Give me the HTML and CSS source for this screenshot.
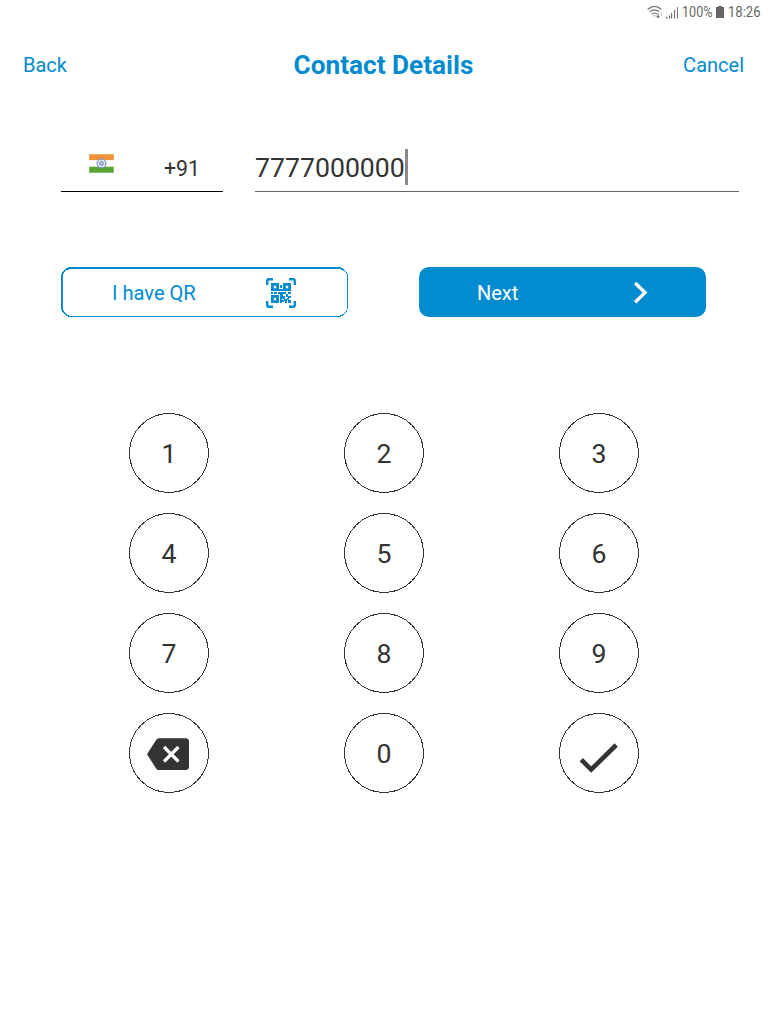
FILE: index.html
```html
<!DOCTYPE html>
<html lang="en">
<head>
<meta charset="utf-8">
<title>Contact Details</title>
<link rel="stylesheet" href="styles.css">
</head>
<body>
<div class="status">
  <svg class="wifi" width="17" height="14" viewBox="0 0 17 14" fill="none" stroke="#737373" stroke-width="1.2"><path d="M.6 4.500Q7.500-1.600 14.400 4.500M2.700 6.900q4.800-4.200 9.600 0M4.800 9.200q2.700-2.300 5.200-.2"/><path d="M6.400 10.400h2.200L7.500 11.800z" fill="#737373" stroke="none"/><path d="M11 8.500v4M9.600 11l1.400 1.600 1.400-1.600" stroke-width="1.1"/><path d="M14.500 8v3" stroke="#ccc"/></svg>
  <svg class="signal" width="13" height="13" viewBox="0 0 13 13" fill="#737373"><path d="M0 11h1.500v1.500H0zM3 9.500h1.200v3H3zM5 7h1.200v5.500H5zM8 4h1.200v8.500H8zM11 1h1v11.500h-1z"/></svg>
  <svg class="battery-text" width="31" height="20"><text x="0" y="15" textLength="30.5" lengthAdjust="spacingAndGlyphs">100%</text></svg>
  <svg class="battery" width="8" height="12" viewBox="0 0 8 12" fill="#666"><path d="M2 0h4v1h2v11H0V1h2z"/></svg>
  <svg class="clock" width="33" height="20"><text x="0" y="15" textLength="32.5" lengthAdjust="spacingAndGlyphs">18:26</text></svg>
</div>
<header class="header">
  <a class="link">Back</a>
  <h1 class="title">Contact Details</h1>
  <a class="link">Cancel</a>
</header>
<main>
  <div class="phone">
    <div class="country">
      <svg class="flag" width="25" height="19" viewBox="0 0 25 19"><path fill="#ef9237" d="M0 0h25v6.300H0z"/><path fill="#fff" d="M0 6.300h25v6.400H0z"/><path fill="#5ba534" d="M0 12.700h25V19H0z"/><path d="M.5.5h24v18H.5z" fill="none" stroke="#fff" stroke-opacity=".25"/><circle cx="12.500" cy="9.400" r="4.500" fill="#dfe5f4" stroke="#6d84bd"/><circle cx="12.500" cy="9.400" r="2" fill="#aebbe0" stroke="#6d84bd" stroke-width=".8"/></svg>
      <span class="code">+91</span>
    </div>
    <div class="number"><span>7777000000</span><i class="caret"></i></div>
  </div>
  <div class="actions">
    <button class="btn btn-outline">
      <svg class="frame" width="287" height="50" viewBox="0 0 287 50" fill="#038bd0" fill-rule="evenodd" shape-rendering="crispEdges"><path d="M10 0h267a10 10 0 0 1 10 10v30a10 10 0 0 1-10 10H10A10 10 0 0 1 0 40V10A10 10 0 0 1 10 0zM9.500 2Q2 3 2 10v30q0 7 7.500 9h268q8.500-2 8.500-9V10q0-7-8.500-8z"/></svg>
      <span class="label label-qr">I have QR</span>
      <svg class="qr" width="30" height="30" viewBox="0 0 30 30" fill="none" stroke="#038bd0"><path stroke-width="2.400" d="M1.200 7V3q0-1.800 1.800-1.800H7M23 1.200h4q1.800 0 1.800 1.800v4M28.800 23v4q0 1.800-1.800 1.800h-4M7 28.800H3q-1.800 0-1.800-1.800v-4"/><path stroke-width="2.800" d="M6.400 6.400h5.200v5.200H6.400zM18.400 6.400h5.200v5.200h-5.200zM6.400 18.400h5.200v5.200H6.400z"/><path fill="#038bd0" stroke="none" d="M14 7h2v3h-2zM13 11h4v2h-4zM5 14h2v2H5zM8 14h3v2H8zM12 14h6v2h-1v2h-3v-2h-2zM18 14h2v2h-2zM22 14h3v2h-3zM20 16h2v3h-2zM22 18h3v2h-3zM14 18h2v7h-2zM16 18h3v3h-3zM18 21h3v2h-3zM16 22h2v2h-2zM21 20h2v2h-2zM22 22h3v3h-3zM19 23h2v2h-2z"/></svg>
    </button>
    <button class="btn btn-next">
      <span class="label label-next">Next</span>
      <svg class="chevron" width="16" height="24" viewBox="0 0 16 24" fill="none" stroke="#fff" stroke-width="3.400"><path d="m1.200 3 9.800 9.600L1.200 22.200"/></svg>
    </button>
  </div>
  <svg width="0" height="0" class="defs"><symbol id="ring" viewBox="0 0 80 80"><circle cx="40" cy="40" r="39.500" fill="none" stroke="#333" shape-rendering="crispEdges"/></symbol></svg>
  <div class="keypad">
    <button class="key"><svg class="ring"><use href="#ring"/></svg>1</button>
    <button class="key"><svg class="ring"><use href="#ring"/></svg>2</button>
    <button class="key"><svg class="ring"><use href="#ring"/></svg>3</button>
    <button class="key"><svg class="ring"><use href="#ring"/></svg>4</button>
    <button class="key"><svg class="ring"><use href="#ring"/></svg>5</button>
    <button class="key"><svg class="ring"><use href="#ring"/></svg>6</button>
    <button class="key"><svg class="ring"><use href="#ring"/></svg>7</button>
    <button class="key"><svg class="ring"><use href="#ring"/></svg>8</button>
    <button class="key"><svg class="ring"><use href="#ring"/></svg>9</button>
    <button class="key"><svg class="ring"><use href="#ring"/></svg><svg class="glyph" width="80" height="80" viewBox="0 0 80 80"><path fill="#333" d="M30 25.300h26.500q3.500 0 3.500 3.500v24.700q0 3.500-3.500 3.500H30q-1.800 0-2.900-1.600L18 41.200l9.100-14.300Q28.200 25.300 30 25.300z"/><path d="m35 34 14.500 14.500M49.500 34 35 48.500" stroke="#fff" stroke-width="3.200"/></svg></button>
    <button class="key"><svg class="ring"><use href="#ring"/></svg>0</button>
    <button class="key"><svg class="ring"><use href="#ring"/></svg><svg class="glyph" width="80" height="80" viewBox="0 0 80 80"><path d="m22.300 46.700 9.900 9.900 25-24.600" fill="none" stroke="#333" stroke-width="4.600"/></svg></button>
  </div>
</main>
</body>
</html>
```
FILE: styles.css
```css
* { box-sizing: border-box; }
body {
  margin: 0;
  height: 1024px;
  background: #fff;
  color: #333;
  font-family: Roboto, sans-serif;
  overflow: hidden;
}
svg { display: block; flex: none; overflow: visible; }
button { padding: 0; border: 0; background: none; font: inherit; color: inherit; }
.status {
  display: flex;
  align-items: center;
  justify-content: flex-end;
  height: 24px;
  padding-right: 7px;
}
.status text { font: 15.5px Roboto, sans-serif; fill: #666; }
.signal { margin: 0 3px 0 2px; }
.battery { margin: 0 4px 0 3px; }
.header {
  display: flex;
  align-items: center;
  justify-content: space-between;
  height: 82px;
  padding: 0 24px 0 23px;
  color: #038bd0;
}
.link { width: 80px; font-size: 20px; line-height: 24px; }
.link:last-child { text-align: right; }
.title { margin: 0; font-size: 26.2px; line-height: 30px; font-weight: 700; }
.phone { display: flex; gap: 32px; height: 86px; padding: 0 29px 0 61px; }
.country {
  display: flex;
  align-items: flex-start;
  width: 162px;
  padding: 48px 0 0 28px;
  border-bottom: 1px solid #000;
}
.code { margin: 2px 0 0 50px; font-size: 21.3px; line-height: 25px; }
.number {
  display: flex;
  flex: 1;
  padding-top: 43px;
  font-size: 26.67px;
  line-height: 38px;
  border-bottom: 1px solid #666;
}
.caret { width: 3px; height: 36px; background: #888; }
.actions { display: flex; gap: 71px; padding: 75px 0 0 61px; }
.btn {
  display: flex;
  position: relative;
  align-items: center;
  width: 287px;
  height: 50px;
  font-size: 20px;
  border-radius: 10px;
}
.btn-outline { color: #038bd0; }
.frame { position: absolute; inset: 0; }
.label { text-align: left; line-height: 24px; margin-top: 2px; }
.label-qr { width: 154px; margin-left: 51px; font-size: 20.1px; }
.qr { margin-top: 2px; }
.btn-next { background: #038bd0; color: #fff; }
.label-next { width: 157px; margin-left: 58px; }
.defs { position: absolute; }
.keypad {
  display: grid;
  grid-template-columns: repeat(3, 80px);
  gap: 20px 135px;
  padding: 96px 0 0 129px;
}
.key {
  display: flex;
  position: relative;
  align-items: center;
  justify-content: center;
  height: 80px;
  padding-top: 2px;
  border-radius: 50%;
  font-size: 26.67px;
}
.ring { position: absolute; inset: 0; width: 80px; height: 80px; }
.glyph { margin-top: -2px; }
```
